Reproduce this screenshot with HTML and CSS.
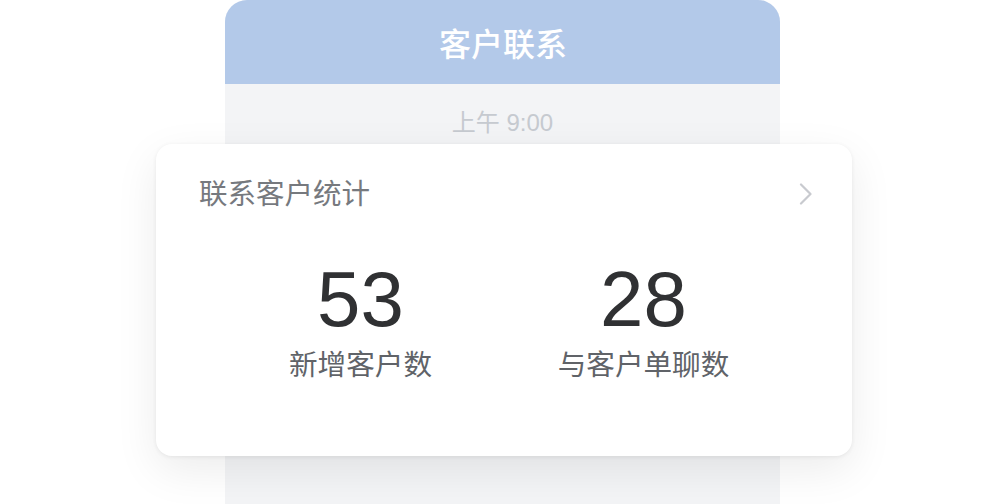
FILE: index.html
```html
<!DOCTYPE html>
<html lang="zh-CN">
<head>
<meta charset="utf-8">
<title>客户联系</title>
<link rel="stylesheet" href="styles.css">
</head>
<body>
<div class="phone">
  <div class="phone-header">客户联系</div>
  <div class="phone-body">
    <div class="time">上午 9:00</div>
    <div class="card">
      <div class="card-head">
        <span class="card-title">联系客户统计</span>
        <svg class="chevron" width="14" height="22" viewBox="0 0 14 22" aria-hidden="true">
          <path d="M2 1.5 L11.5 11 L2 20.5" fill="none" stroke="#c8cacf" stroke-width="2.2" stroke-linecap="round" stroke-linejoin="round"/>
        </svg>
      </div>
      <div class="stats">
        <div class="stat">
          <div class="stat-num">53</div>
          <div class="stat-label">新增客户数</div>
        </div>
        <div class="stat">
          <div class="stat-num">28</div>
          <div class="stat-label">与客户单聊数</div>
        </div>
      </div>
    </div>
  </div>
</div>
</body>
</html>
```
FILE: styles.css
```css
html, body {
  margin: 0;
  padding: 0;
  background: #ffffff;
  overflow: hidden;
}
body {
  font-family: "Liberation Sans", "Noto Sans CJK SC", sans-serif;
  height: 504px;
}
.phone {
  width: 555px;
  height: 504px;
  margin-left: 225px;
  border-radius: 22px 22px 0 0;
  background: #f3f4f6;
  display: flex;
  flex-direction: column;
}
.phone-header {
  height: 84px;
  flex: none;
  background: #b3c9e9;
  border-radius: 22px 22px 0 0;
  color: #ffffff;
  font-size: 32px;
  font-weight: 500;
  display: flex;
  align-items: center;
  justify-content: center;
  padding-left: 1px;
}
.phone-body {
  display: flex;
  flex-direction: column;
}
.time {
  margin-top: 24px;
  height: 30px;
  line-height: 30px;
  font-size: 24px;
  color: #c6cad0;
  text-align: center;
}
.card {
  margin: 6px -72px 0 -69px;
  height: 312px;
  box-sizing: border-box;
  background: #ffffff;
  border-radius: 16px;
  box-shadow: 0 1px 4px rgba(0, 0, 0, 0.07), 0 14px 44px rgba(0, 0, 0, 0.08);
  padding: 30px 39px 0 43px;
}
.card-head {
  display: flex;
  align-items: center;
  justify-content: space-between;
  height: 40px;
}
.card-title {
  font-size: 28.5px;
  line-height: 40px;
  color: #76797e;
}
.chevron {
  display: block;
  margin-top: -1px;
}
.stats {
  display: flex;
  margin: 46px 28px 0 20px;
}
.stat {
  flex: 1;
  display: flex;
  flex-direction: column;
  align-items: center;
}
.stat-num {
  font-size: 78px;
  line-height: 78px;
  color: #303133;
}
.stat-label {
  margin-top: 9px;
  font-size: 28.6px;
  line-height: 36px;
  color: #606368;
}
```
